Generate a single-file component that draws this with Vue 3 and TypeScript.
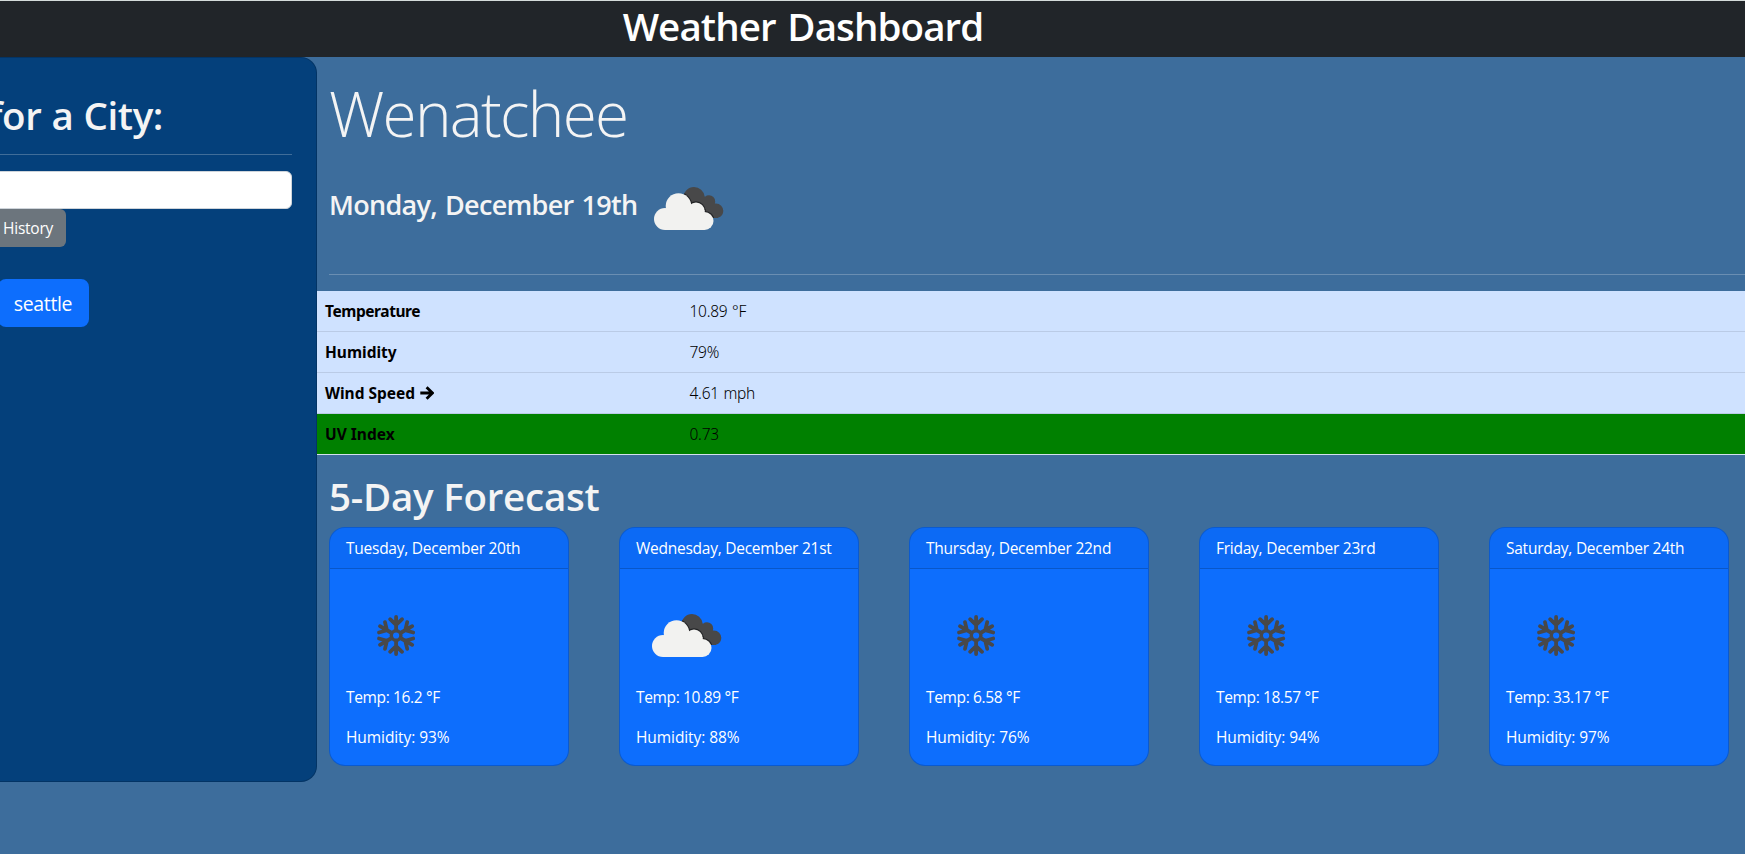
<script setup lang="ts">
import { defineComponent, h } from 'vue'

type Sky = 'snow' | 'clouds'

interface Forecast {
  date: string
  sky: Sky
  temp: string
  humidity: string
}

const forecast: Forecast[] = [
  { date: 'Tuesday, December 20th', sky: 'snow', temp: '16.2', humidity: '93' },
  { date: 'Wednesday, December 21st', sky: 'clouds', temp: '10.89', humidity: '88' },
  { date: 'Thursday, December 22nd', sky: 'snow', temp: '6.58', humidity: '76' },
  { date: 'Friday, December 23rd', sky: 'snow', temp: '18.57', humidity: '94' },
  { date: 'Saturday, December 24th', sky: 'snow', temp: '33.17', humidity: '97' },
]

const arms = [0, 60, 120, 180, 240, 300]

const CloudShapes = defineComponent({
  setup: () => () => [
    h('circle', { cx: 27, cy: 61, r: 11 }),
    h('circle', { cx: 40.5, cy: 48, r: 12.8 }),
    h('circle', { cx: 58, cy: 53, r: 8.6 }),
    h('circle', { cx: 66.5, cy: 63, r: 9 }),
    h('rect', { x: 27, y: 52, width: 39.5, height: 20 }),
  ],
})

const WeatherIcon = defineComponent({
  props: { sky: { type: String, required: true } },
  setup: (props) => () =>
    h('svg', { width: 100, height: 100, viewBox: '0 0 100 100' },
      props.sky === 'snow'
        ? [
            h('g', { transform: 'translate(50.1 50.5)', fill: 'none', stroke: '#484849', 'stroke-width': 3.8, 'stroke-linecap': 'round' }, [
              h('circle', { r: 4.8, 'stroke-width': 3.4 }),
              ...arms.map((a) => h('path', { d: 'M0-6V-18.6M-6-16.3 0-10.6 6-16.3', transform: `rotate(${a})` })),
            ]),
          ]
        : [
            h('defs', [
              h('clipPath', { id: 'back-cloud' }, [
                h('circle', { cx: 56, cy: 39.7, r: 10.7 }),
                h('circle', { cx: 71, cy: 43.5, r: 6.2 }),
                h('circle', { cx: 78, cy: 52.8, r: 7.3 }),
                h('path', { d: 'M50 48 66 38 76 46 80 60H60Z' }),
              ]),
            ]),
            h('g', { 'clip-path': 'url(#back-cloud)' }, [
              h('rect', { width: 100, height: 100, fill: '#484849' }),
              h('g', { stroke: '#232426', 'stroke-width': 2.2 }, [h(CloudShapes)]),
            ]),
            h('g', { fill: '#f2f2f0' }, [h(CloudShapes)]),
          ]),
})
</script>

<template>
  <div class="page">
    <header class="topbar"><h1>Weather Dashboard</h1></header>
    <div class="layout">
      <aside class="sidebar">
        <div class="sidebar-inner">
          <h2 class="search-title">Search for a City:</h2>
          <hr class="rule side-rule" />
          <input class="city-input" type="text" aria-label="City" />
          <div><button class="clear">Clear History</button></div>
          <div><button class="city">seattle</button></div>
        </div>
      </aside>
      <main class="main">
        <section class="current">
          <h2 class="place">Wenatchee</h2>
          <div class="today"><h3>Monday, December 19th</h3><WeatherIcon sky="clouds" /></div>
          <hr class="rule" />
        </section>
        <table class="stats">
          <tbody>
            <tr><th class="tight">Temperature</th><td>10.89 °F</td></tr>
            <tr><th>Humidity</th><td>79%</td></tr>
            <tr>
              <th>Wind Speed <svg class="arrow" width="14" height="14" viewBox="0 0 14 14"><path d="M.3 7H12M6.6 1.2 12.4 7 6.6 12.8" /></svg></th>
              <td>4.61 mph</td>
            </tr>
            <tr class="uv"><th>UV Index</th><td>0.73</td></tr>
          </tbody>
        </table>
        <section class="forecast">
          <h2>5-Day Forecast</h2>
          <div class="cards">
            <article v-for="day in forecast" :key="day.date" class="card">
              <div class="card-head">{{ day.date }}</div>
              <div class="card-body">
                <WeatherIcon :sky="day.sky" />
                <p class="temp">Temp: {{ day.temp }} °F</p>
                <p>Humidity: {{ day.humidity }}%</p>
              </div>
            </article>
          </div>
        </section>
      </main>
    </div>
  </div>
</template>

<style>
body {
  margin: 0;
  background: #3d6d9c;
}
</style>

<style scoped>
.page {
  width: 100%;
  height: 854px;
  overflow: hidden;
  box-sizing: border-box;
  border-top: 1px solid #d5dcda;
  background: #3d6d9c;
  font: 400 15.5px/24px "Open Sans", "Noto Sans", sans-serif;
  letter-spacing: -0.25px;
  color: #f4f4f4;
}
.page * { box-sizing: border-box; }
h1, h2, h3, p { margin: 0; }
h1, .search-title, .forecast h2 {
  font-size: 38.5px;
  font-weight: 600;
  line-height: 48px;
  white-space: nowrap;
}
.topbar {
  height: 56px;
  background: #212529;
  color: #fff;
  text-align: center;
  padding: 1px 139px 0 0;
}
h1 { letter-spacing: -0.9px; word-spacing: 2.5px; }
.layout { display: flex; align-items: flex-start; }
.sidebar {
  width: 436px;
  height: 725px;
  flex: none;
  margin-left: -119px;
  padding: 0 24px;
  background: #04407b;
  border: 1px solid rgba(0, 0, 0, 0.175);
  border-radius: 16px;
}
.sidebar-inner { padding-top: 33px; }
.search-title {
  width: 257px;
  display: flex;
  justify-content: flex-end;
  letter-spacing: -0.4px;
  word-spacing: 0.5px;
}
.rule {
  height: 1px;
  margin: 0;
  border: 0;
  background: rgba(244, 244, 244, 0.25);
}
.side-rule { margin: 15px 0 16px; }
.city-input {
  display: block;
  width: 100%;
  height: 38px;
  border: 1px solid #ced4da;
  border-radius: 6px;
  background: #fff;
}
button {
  display: block;
  border: 0;
  color: #fff;
  font-family: inherit;
  white-space: nowrap;
}
.clear {
  width: 160px;
  height: 38px;
  padding: 0 13px;
  border-radius: 6px;
  background: #6c757d;
  font-size: 15.5px;
  letter-spacing: -0.25px;
  word-spacing: 1px;
  text-align: right;
}
.city {
  width: 91px;
  height: 48px;
  padding: 0 7px 0 6px;
  margin: 32px 0 0 92px;
  border-radius: 8px;
  background: #0d6efd;
  font-size: 19.5px;
  letter-spacing: -0.35px;
}
.main { flex: 1; min-width: 0; }
.current { padding: 0 0 0 12px; }
.place {
  padding-top: 18px;
  font-family: "Open Sans", "Noto Sans", sans-serif;
  font-size: 62px;
  font-weight: 300;
  line-height: 77px;
  letter-spacing: -1.7px;
}
.today {
  display: flex;
  height: 100px;
  margin-top: 6px;
  margin-bottom: 16px;
}
.today h3 {
  width: 309px;
  padding-top: 30px;
  font-size: 27px;
  font-weight: 600;
  line-height: 34px;
  letter-spacing: -0.7px;
  word-spacing: 1.8px;
  white-space: nowrap;
}
.stats {
  width: 100%;
  margin-top: 16px;
  border-spacing: 0;
  table-layout: fixed;
  background: #cfe2ff;
  color: #000;
}
.stats th, .stats td {
  height: 41px;
  padding: 0 8px;
  border-bottom: 1px solid #bacbe6;
  text-align: left;
}
.stats th {
  width: 365px;
  font-family: "Noto Sans", "Open Sans", sans-serif;
  font-weight: 700;
  letter-spacing: 0;
}
.stats th.tight { letter-spacing: -0.43px; }
.stats td {
  padding-left: 7.5px;
  font-family: "Noto Sans", "Open Sans", sans-serif;
  font-weight: 350;
  letter-spacing: -0.25px;
  word-spacing: 0.8px;
}
.stats .uv { background: #008000; }
.stats .uv th, .stats .uv td { border-bottom-color: #d3e0ee; }
.arrow {
  margin-left: 1px;
  vertical-align: -1px;
  fill: none;
  stroke: #000;
  stroke-width: 2.8;
}
.forecast { padding: 16px 0 0 12px; }
.forecast h2 { padding-top: 1px; height: 56px; letter-spacing: -0.23px; }
.cards { display: flex; gap: 50px; }
.card {
  width: 240px;
  height: 239px;
  flex: none;
  border: 1px solid rgba(0, 0, 0, 0.175);
  border-radius: 16px;
  overflow: hidden;
  background: #0d6efd;
  background-clip: border-box;
  color: #fff;
}
.card-head {
  height: 41px;
  padding: 8px 16px;
  border-bottom: 1px solid rgba(0, 0, 0, 0.175);
  background: rgba(0, 0, 0, 0.03);
  white-space: nowrap;
}
.card-body { padding: 16px; }
.card-body svg { display: block; }
.card-body p { letter-spacing: -0.08px; }
.card-body .temp { margin-bottom: 16px; letter-spacing: -0.35px; }
</style>
